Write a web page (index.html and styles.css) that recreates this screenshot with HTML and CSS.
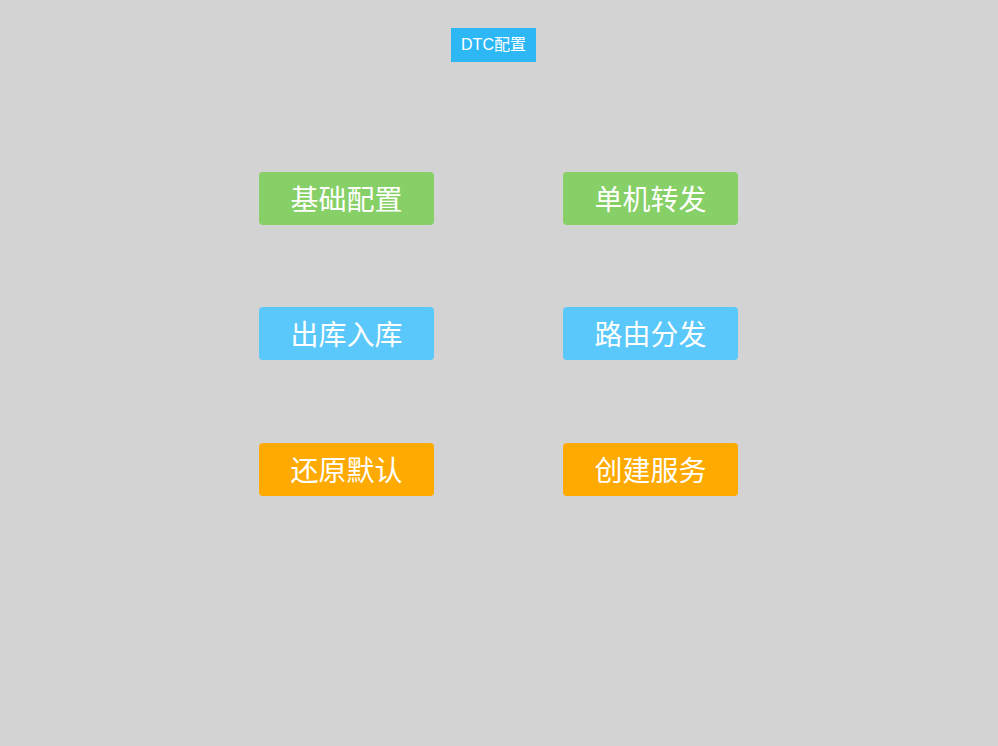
FILE: index.html
```html
<!DOCTYPE html>
<html lang="zh">
<head>
<meta charset="utf-8">
<title>DTC配置</title>
<link rel="stylesheet" href="styles.css">
</head>
<body>
<div class="page">
  <div class="header"><div class="title">DTC配置</div></div>
  <div class="grid">
    <div class="btn green">基础配置</div>
    <div class="btn green">单机转发</div>
    <div class="btn blue">出库入库</div>
    <div class="btn blue">路由分发</div>
    <div class="btn orange">还原默认</div>
    <div class="btn orange">创建服务</div>
  </div>
</div>
</body>
</html>
```
FILE: styles.css
```css
html, body {
  margin: 0;
  padding: 0;
  background: #d3d3d3;
  font-family: "Microsoft YaHei", "Noto Sans CJK SC", "Liberation Sans", sans-serif;
}
.page {
  display: flex;
  flex-direction: column;
  align-items: center;
  height: 746px;
  padding-right: 1px;
}
.header {
  padding-top: 28px;
  padding-right: 10px;
}
.title {
  width: 85px;
  height: 34px;
  background: #2db7f5;
  color: #fff;
  font-family: "Liberation Sans", "Noto Sans CJK SC", sans-serif;
  font-size: 16px;
  line-height: 34px;
  text-align: center;
}
.grid {
  margin-top: 110px;
  display: grid;
  grid-template-columns: 175px 175px;
  column-gap: 129px;
  row-gap: 82px;
}
.btn {
  height: 53px;
  border-radius: 4px;
  color: #fff;
  font-size: 28px;
  line-height: 53px;
  text-align: center;
}
.green { background: #87d068; }
.blue { background: #5ac8fa; }
.orange { background: #ffaa00; margin-top: 1px; }
```
